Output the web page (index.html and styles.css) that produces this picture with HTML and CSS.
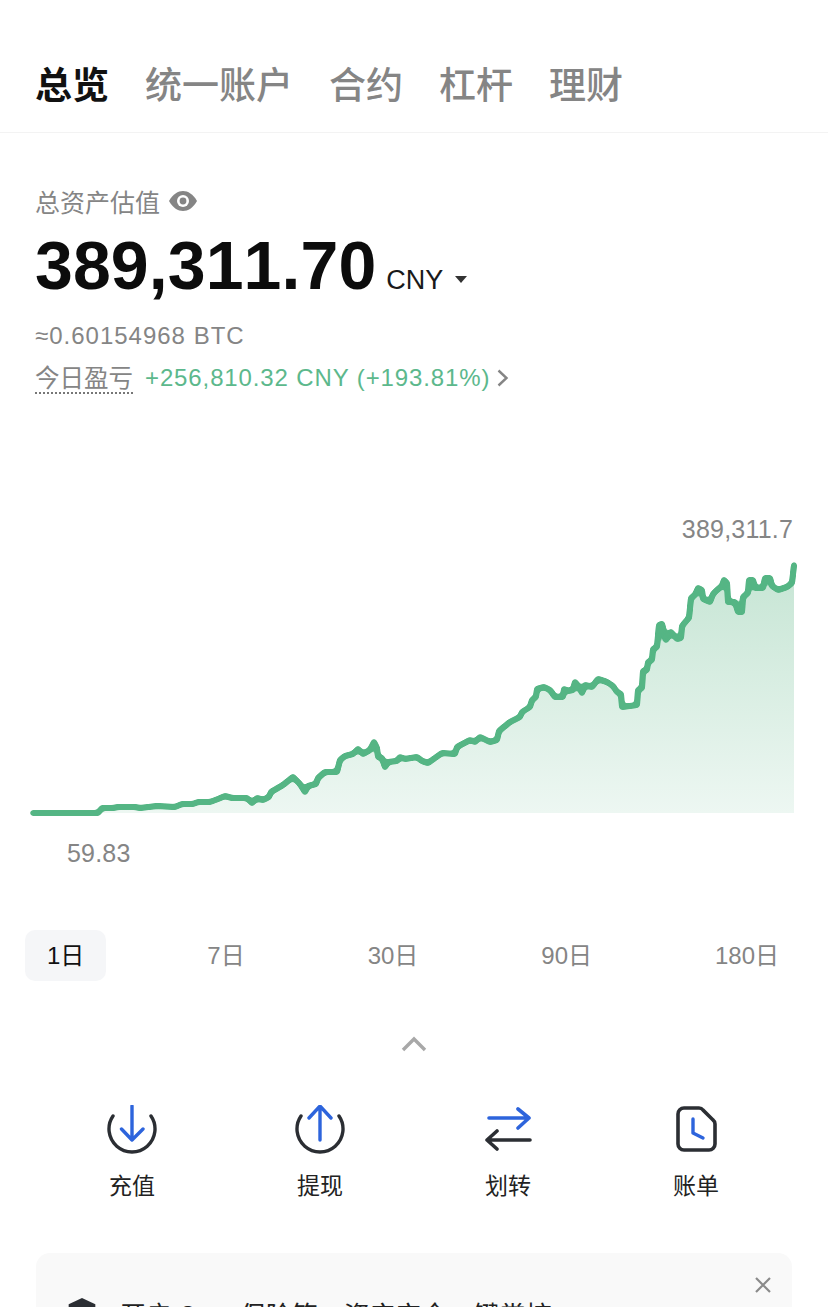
FILE: index.html
```html
<!DOCTYPE html>
<html lang="zh-CN">
<head>
  <meta charset="UTF-8">
  <meta name="viewport" content="width=device-width, initial-scale=1.0">
  <title>总览</title>
  <link rel="stylesheet" href="styles.css">
</head>
<body>
  <!-- Tabs -->
  <nav class="tabs">
    <a class="tab active">总览</a>
    <a class="tab">统一账户</a>
    <a class="tab">合约</a>
    <a class="tab">杠杆</a>
    <a class="tab">理财</a>
  </nav>

  <!-- Summary -->
  <section class="summary">
    <div class="summary-label">
      <span>总资产估值</span>
      <svg class="eye" viewBox="0 0 28 20" width="28" height="20">
        <path d="M0 10C4 3 9 0 14 0s10 3 14 10c-4 7-9 10-14 10S4 17 0 10z" fill="#858585"/>
        <circle cx="14" cy="10" r="6" fill="#fff"/>
        <circle cx="14" cy="10" r="3.4" fill="#858585"/>
      </svg>
    </div>
    <div class="balance">
      <span class="balance-num">389,311.70</span>
      <span class="balance-cur">CNY</span>
      <span class="caret"></span>
    </div>
    <div class="btc">≈0.60154968 BTC</div>
    <div class="pnl">
      <span class="pnl-label">今日盈亏</span>
      <span class="pnl-value">+256,810.32 CNY (+193.81%)</span>
      <svg viewBox="0 0 14 20" width="14" height="20"><path d="M2.5 2.5l8 7.5-8 7.5" fill="none" stroke="#858585" stroke-width="2.4"/></svg>
    </div>
  </section>

  <!-- Chart -->
  <section class="chart">
    <span class="chart-max">389,311.7</span>
    <span class="chart-min">59.83</span>
    <svg class="chart-svg" viewBox="0 500 828 340" width="828" height="340">
      <defs>
        <linearGradient id="area" gradientUnits="userSpaceOnUse" x1="0" y1="565" x2="0" y2="813">
          <stop offset="0" stop-color="#c6e5d4"/>
          <stop offset="1" stop-color="#edf7f2"/>
        </linearGradient>
        <!-- blur then re-sharpen the alpha, this rounds off the corners of the line -->
        <filter id="soft" filterUnits="userSpaceOnUse" x="0" y="500" width="828" height="340">
          <feGaussianBlur stdDeviation="1.5"/>
          <feColorMatrix type="matrix" values="1 0 0 0 0  0 1 0 0 0  0 0 1 0 0  0 0 0 5 -1.6"/>
        </filter>
      </defs>
      <path fill="url(#area)" d="M33 813L98 813 102 808 113 808 118 807 135 807 140 808 157 806 175 807 182 804 193 804 198 802 210 802 218 799 225 796 232 798 247 798 252 803 257 798 263 800 269 797 271 792 283 785 293 777 300 784 305 792 308 786 316 784 318 778 325 772 337 772 340 760 345 756 353 754 358 749 363 754 370 750 374 742 377 748 378 757 382 758 385 767 388 762 397 761 400 757 405 759 417 757 422 761 428 763 435 758 442 753 455 754 457 747 470 740 475 742 480 737 490 742 497 740 499 731 510 722 520 717 522 712 530 707 532 700 536 697 537 689 544 687 550 690 555 697 563 697 564 689 568 691 573 690 575 682 579 687 582 693 585 685 592 687 598 679 607 682 613 686 617 692 621 694 622 707 637 705 638 690 642 688 643 671 647 670 648 662 652 660 653 649 657 647 659 625 662 624 666 640 671 632 677 639 681 638 682 626 687 620 689 618 691 598 695 595 698 588 702 590 703 599 710 602 713 594 717 590 722 586 724 580 727 583 728 602 735 602 738 612 742 612 743 597 748 593 749 580 753 580 755 588 763 588 765 578 770 578 772 586 778 590 787 587 792 583 794 565 794 813Z"/>
      <path filter="url(#soft)" fill="none" stroke="#54b584" stroke-width="5.6" stroke-linejoin="round" stroke-linecap="round" d="M33 813L98 813 102 808 113 808 118 807 135 807 140 808 157 806 175 807 182 804 193 804 198 802 210 802 218 799 225 796 232 798 247 798 252 803 257 798 263 800 269 797 271 792 283 785 293 777 300 784 305 792 308 786 316 784 318 778 325 772 337 772 340 760 345 756 353 754 358 749 363 754 370 750 374 742 377 748 378 757 382 758 385 767 388 762 397 761 400 757 405 759 417 757 422 761 428 763 435 758 442 753 455 754 457 747 470 740 475 742 480 737 490 742 497 740 499 731 510 722 520 717 522 712 530 707 532 700 536 697 537 689 544 687 550 690 555 697 563 697 564 689 568 691 573 690 575 682 579 687 582 693 585 685 592 687 598 679 607 682 613 686 617 692 621 694 622 707 637 705 638 690 642 688 643 671 647 670 648 662 652 660 653 649 657 647 659 625 662 624 666 640 671 632 677 639 681 638 682 626 687 620 689 618 691 598 695 595 698 588 702 590 703 599 710 602 713 594 717 590 722 586 724 580 727 583 728 602 735 602 738 612 742 612 743 597 748 593 749 580 753 580 755 588 763 588 765 578 770 578 772 586 778 590 787 587 792 583 794 565"/>
    </svg>
  </section>

  <!-- Range -->
  <div class="ranges">
    <span class="range active">1日</span>
    <span class="range">7日</span>
    <span class="range">30日</span>
    <span class="range">90日</span>
    <span class="range">180日</span>
  </div>

  <div class="collapse">
    <svg viewBox="0 0 26 16" width="26" height="16"><path d="M2 14L13 3l11 11" fill="none" stroke="#a8a8a8" stroke-width="3.4"/></svg>
  </div>

  <!-- Actions -->
  <div class="actions">
    <div class="action">
      <svg viewBox="0 0 50 50" width="50" height="50">
        <path d="M6 11A23 23 0 1 0 44 11" fill="none" stroke="#2b2e33" stroke-width="3.4" stroke-linecap="round"/>
        <path d="M25 1v34M14.5 24L25 35l11-11" fill="none" stroke="#2d64dc" stroke-width="3.4" stroke-linecap="round" stroke-linejoin="round"/>
      </svg>
      <span>充值</span>
    </div>
    <div class="action">
      <svg viewBox="0 0 50 50" width="50" height="50">
        <path d="M6 11A23 23 0 1 0 44 11" fill="none" stroke="#2b2e33" stroke-width="3.4" stroke-linecap="round"/>
        <path d="M25 35V1M14 13L25 1l11 12" fill="none" stroke="#2d64dc" stroke-width="3.4" stroke-linecap="round" stroke-linejoin="round"/>
      </svg>
      <span>提现</span>
    </div>
    <div class="action">
      <svg viewBox="0 0 50 50" width="50" height="50">
        <path d="M6 13h40M35 4l11 9-11 10" fill="none" stroke="#2d64dc" stroke-width="3.6" stroke-linecap="round" stroke-linejoin="round"/>
        <path d="M47 35H4M14 26L4 35l10 9" fill="none" stroke="#2b2e33" stroke-width="3.6" stroke-linecap="round" stroke-linejoin="round"/>
      </svg>
      <span>划转</span>
    </div>
    <div class="action">
      <svg viewBox="0 0 50 50" width="50" height="50">
        <path d="M13 3H28a5 5 0 0 1 4 2l10 10a5 5 0 0 1 2 4V39a6 6 0 0 1-6 6H13a6 6 0 0 1-6-6V9a6 6 0 0 1 6-6z" fill="none" stroke="#2b2e33" stroke-width="3.6"/>
        <path d="M22 14v14l10 5" fill="none" stroke="#2d64dc" stroke-width="3.4" stroke-linecap="round" stroke-linejoin="round"/>
      </svg>
      <span>账单</span>
    </div>
  </div>

  <!-- Banner, cut off by the bottom of the window -->
  <div class="banner">
    <svg class="banner-close" viewBox="0 0 18 18" width="18" height="18"><path d="M2 2l14 14M16 2L2 16" stroke="#8a8a8a" stroke-width="2.2"/></svg>
    <div class="banner-row">
      <svg viewBox="0 0 32 36" width="32" height="32"><path d="M16 0l15 7v14c0 8-7 13-15 15C8 34 1 29 1 21V7z" fill="#2b2e33"/></svg>
      <span>开启 Gate 保险箱，资产安全一键掌控</span>
    </div>
  </div>
</body>
</html>
```

FILE: styles.css
```css
html, body {
  height: 1307px;
  overflow: hidden;
}
body {
  margin: 0;
  background: white;
  color: #111;
  font-family: "Liberation Sans", "Noto Sans CJK SC", sans-serif;
}
.tabs {
  height: 133px;
  box-sizing: border-box;
  padding: 58px 0 0 35px;
  display: flex;
  gap: 36px;
  border-bottom: 1px solid #f3f3f3;
}
.tab {
  font-family: "Noto Sans CJK SC", sans-serif;
  font-size: 37px;
  line-height: 50px;
  font-weight: 500;
  color: #858585;
}
.tab.active {
  font-weight: 700;
  color: #111;
}
.summary {
  padding: 0 35px;
}
.summary-label {
  margin-top: 50px;
  height: 36px;
  display: flex;
  align-items: center;
  gap: 9px;
  font-family: "Noto Sans CJK SC", sans-serif;
  font-size: 25px;
  color: #858585;
}
.balance {
  margin-top: 8px;
  height: 76px;
  display: flex;
  align-items: baseline;
}
.balance-num {
  font-size: 68px;
  line-height: 76px;
  font-weight: 700;
  font-kerning: none;
  letter-spacing: 0.1px;
  color: #0c0c0c;
}
.balance-cur {
  margin-left: 10px;
  font-size: 27px;
  color: #1a1a1a;
}
.caret {
  margin-left: 12px;
  width: 0;
  height: 0;
  border-left: 6px solid transparent;
  border-right: 6px solid transparent;
  border-top: 7px solid #333;
  align-self: center;
  margin-top: 28px;
}
.btc {
  margin-top: 16px;
  font-size: 24px;
  line-height: 34px;
  letter-spacing: 1px;
  color: #858585;
}
.pnl {
  margin-top: 7px;
  height: 36px;
  display: flex;
  align-items: center;
}
.pnl-label {
  font-family: "Noto Sans CJK SC", sans-serif;
  font-size: 24.5px;
  line-height: 30px;
  color: #858585;
  border-bottom: 2px dotted #777;
}
.pnl-value {
  margin-left: 12px;
  margin-right: 6px;
  font-size: 24px;
  letter-spacing: 0.88px;
  color: #5cb88c;
}
.chart {
  position: relative;
  height: 340px;
  margin-top: 104px;
}
.chart-svg {
  display: block;
}
.chart-max, .chart-min {
  position: absolute;
  font-size: 25px;
  line-height: 30px;
  letter-spacing: 0.2px;
  color: #858585;
}
.chart-max {
  top: 14px;
  right: 35px;
}
.chart-min {
  top: 338px;
  left: 67px;
}
.ranges {
  margin-top: 90px;
  padding: 0 27px 0 25px;
  display: flex;
  justify-content: space-between;
}
.range {
  height: 51px;
  padding: 0 22px;
  line-height: 51px;
  font-size: 24px;
  color: #858585;
  border-radius: 10px;
}
.range.active {
  background: #f5f6f8;
  color: #111;
}
.collapse {
  margin-top: 55px;
  height: 16px;
  display: flex;
  justify-content: center;
}
.collapse svg {
  display: block;
}
.actions {
  margin-top: 53px;
  padding: 0 38px;
  display: grid;
  grid-template-columns: repeat(4, 1fr);
}
.action {
  display: flex;
  flex-direction: column;
  align-items: center;
  gap: 12px;
  font-family: "Noto Sans CJK SC", sans-serif;
  font-size: 23px;
  line-height: 34px;
  color: #222;
}
.banner {
  position: relative;
  margin: 52px 36px 0;
  height: 54px;
  box-sizing: border-box;
  padding-top: 42px;
  background: #f9f9f9;
  border-radius: 14px 14px 0 0;
  overflow: hidden;
}
.banner-close {
  position: absolute;
  top: 23px;
  right: 20px;
}
.banner-row {
  display: flex;
  align-items: center;
  gap: 22px;
  padding-left: 30px;
  font-family: "Noto Sans CJK SC", sans-serif;
  font-size: 26px;
  color: #222;
}
```
